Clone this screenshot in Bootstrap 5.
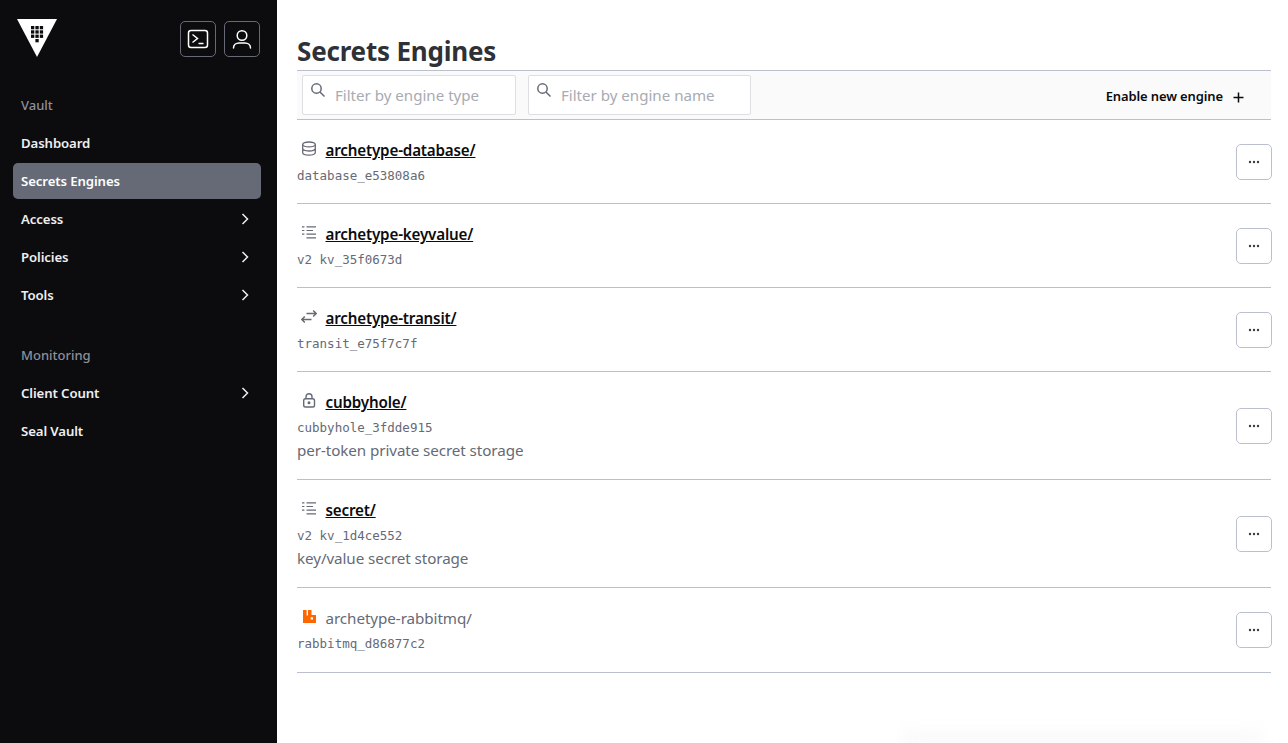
<!doctype html>
<html lang="en"><head><meta charset="utf-8"><title>Secrets Engines</title>
<link href="https://cdn.jsdelivr.net/npm/bootstrap@5.3.0/dist/css/bootstrap.min.css" rel="stylesheet">
<style>
html,body{height:743px;overflow:hidden}
body{font-family:"Noto Sans",sans-serif;background:#fff;color:#3b3d45}
.shell{height:743px}
.side{width:277px;background:#0c0c0e;flex:none}
.side-top{height:95px;padding:19px 17px 0 17px}
.tool-btn{width:36px;height:36px;border:1px solid #656a76;border-radius:5px;background:transparent;padding:0;margin-top:2px;display:flex;align-items:center;justify-content:center}
.side-label{font-size:13px;font-weight:500;color:#8c909c;padding:0 21px;height:20px;line-height:20px}
.side-list{padding:10px 16px 0 13px}
.side-item{height:36px;margin-bottom:2px;padding:2px 8px 0;border-radius:5px;color:#efeff1;font-size:13.2px;font-weight:600;letter-spacing:-.1px;text-decoration:none}
.side-item svg{margin-top:-2px}
.side-item.on{background:#656a76;color:#fff}
.side-gap{height:30px}
.main-area{padding:0 17px 0 20px;min-width:0;position:relative}
.page-title{font-size:26px;font-weight:700;color:#2f3136;margin:0;height:70px;padding-top:34px;line-height:34px;letter-spacing:-.2px}
.tools{height:50px;background:#fafafb;border-top:1px solid #bac1cc;border-bottom:1px solid #bac1cc;padding:4px 0 0 5px}
.filter{height:40px;border:1px solid #dedfe3;border-radius:2px;background:#fff;padding-left:32px;font-size:15.1px;color:#a8abb2;line-height:38px;position:relative}
.filter svg{position:absolute;left:7px;top:6px}
.f1{width:214px;margin-right:12px}
.f2{width:223px}
.enable{font-size:13px;font-weight:600;color:#0c0c0e;margin-left:auto;padding-right:26px;margin-top:-1px;letter-spacing:-.12px}
.enable svg{margin-left:9px}
.eng{border-bottom:1px solid #bac1cc}
.eng-body{padding-top:18px;align-self:flex-start}
.h84{height:84px}.h108{height:108px}.h85{height:85px}
.eng-head{height:24px;line-height:24px}
.eng-ico{width:28.5px;flex:none;padding:3px 0 0 4px}
.eng-ico svg{display:block}
.eng-name{font-size:15.2px;font-weight:600;color:#0c0c0e;text-decoration:underline;letter-spacing:-.18px}
.eng-name.dim{font-weight:400;color:#656a76;text-decoration:none;letter-spacing:-.06px}
.eng-id{font-family:"DejaVu Sans Mono",monospace;font-size:12.5px;color:#656a76;line-height:28px;height:24px}
.eng-desc{font-size:15.2px;color:#656a76;line-height:24px;letter-spacing:-.08px}
.more{width:36px;height:36px;border:1px solid #bac1cc;border-radius:5px;background:#fff;margin-right:-1px;padding:0;display:flex;align-items:center;justify-content:center;flex:none}
.fade-edge{position:absolute;left:625px;width:360px;top:729px;height:30px;background:#f6f6f6;filter:blur(8px);opacity:.5}
</style></head><body>
<div class="d-flex shell">
<nav class="side">
 <div class="side-top d-flex justify-content-between">
  <svg width="40" height="38" viewBox="0 0 40 38"><path d="M0 0h40L20 38z" fill="#fff"/><g fill="#0c0c0e"><rect x="14" y="7" width="3.300" height="3.300"/><rect x="18.400" y="7" width="3.300" height="3.300"/><rect x="22.800" y="7" width="3.300" height="3.300"/><rect x="14" y="11.300" width="3.300" height="3.300"/><rect x="18.400" y="11.300" width="3.300" height="3.300"/><rect x="22.800" y="11.300" width="3.300" height="3.300"/><rect x="14" y="15.600" width="3.300" height="3.300"/><rect x="18.400" y="15.600" width="3.300" height="3.300"/><rect x="22.800" y="15.600" width="3.300" height="3.300"/><rect x="18.400" y="20" width="3.300" height="3.300"/></g></svg>
  <div class="d-flex gap-2">
   <button class="tool-btn" aria-label="Console"><svg width="24" height="24" viewBox="0 0 24 24" fill="none" stroke="#fff" stroke-width="1.5"><rect x="2.500" y="3.500" width="19" height="17" rx="2.500"/><path d="M6.500 7.500l5 4-5 4M12.500 16.500h5"/></svg></button>
   <button class="tool-btn" aria-label="User"><svg width="24" height="24" viewBox="0 0 24 24" fill="none" stroke="#fff" stroke-width="1.5"><circle cx="12" cy="8.500" r="4.800"/><path d="M3.500 21c0-3 2.500-5 5.500-5h6c3 0 5.500 2 5.500 5" stroke-linecap="round"/></svg></button>
  </div>
 </div>
 <div class="side-label">Vault</div>
 <div class="side-list">
  <a class="side-item d-flex align-items-center">Dashboard</a>
  <a class="side-item on d-flex align-items-center">Secrets Engines</a>
  <a class="side-item d-flex align-items-center justify-content-between">Access<svg width="16" height="16" viewBox="0 0 16 16" fill="none" stroke="#efeff1" stroke-width="1.5"><path d="M5.500 3l5 5-5 5"/></svg></a>
  <a class="side-item d-flex align-items-center justify-content-between">Policies<svg width="16" height="16" viewBox="0 0 16 16" fill="none" stroke="#efeff1" stroke-width="1.5"><path d="M5.500 3l5 5-5 5"/></svg></a>
  <a class="side-item d-flex align-items-center justify-content-between">Tools<svg width="16" height="16" viewBox="0 0 16 16" fill="none" stroke="#efeff1" stroke-width="1.5"><path d="M5.500 3l5 5-5 5"/></svg></a>
 </div>
 <div class="side-gap"></div>
 <div class="side-label">Monitoring</div>
 <div class="side-list">
  <a class="side-item d-flex align-items-center justify-content-between">Client Count<svg width="16" height="16" viewBox="0 0 16 16" fill="none" stroke="#efeff1" stroke-width="1.5"><path d="M5.500 3l5 5-5 5"/></svg></a>
  <a class="side-item d-flex align-items-center">Seal Vault</a>
 </div>
</nav>
<main class="main-area flex-grow-1">
 <h1 class="page-title">Secrets Engines</h1>
 <div class="tools d-flex align-items-start">
  <div class="filter f1"><svg width="16" height="16" viewBox="0 0 16 16" fill="none" stroke="#656a76" stroke-width="1.500"><circle cx="6.500" cy="6.500" r="4.700"/><path d="M10 10l4.500 4.500"/></svg>Filter by engine type</div>
  <div class="filter f2"><svg width="16" height="16" viewBox="0 0 16 16" fill="none" stroke="#656a76" stroke-width="1.500"><circle cx="6.500" cy="6.500" r="4.700"/><path d="M10 10l4.500 4.500"/></svg>Filter by engine name</div>
  <div class="enable align-self-center">Enable new engine<svg width="13" height="13" viewBox="0 0 13 13" stroke="#0c0c0e" stroke-width="1.500"><path d="M6.500 1.500v10M1.500 6.500h10"/></svg></div>
 </div>

 <div class="eng h84 d-flex justify-content-between align-items-center"><div class="eng-body">
  <div class="eng-head d-flex"><div class="eng-ico"><svg width="16" height="16" viewBox="0 0 16 16" fill="none" stroke="#656a76" stroke-width="1.300"><ellipse cx="8" cy="3.400" rx="6.300" ry="2.400"/><path d="M1.700 3.400v8.400c0 1.300 2.800 2.400 6.300 2.400s6.300-1.100 6.300-2.400V3.400M1.700 7.600C1.700 8.900 4.500 10 8 10s6.300-1.100 6.300-2.400"/></svg></div><a class="eng-name">archetype-database/</a></div>
  <div class="eng-id">database_e53808a6</div></div>
  <button class="more" aria-label="More"><svg width="12" height="4" viewBox="0 0 12 4" fill="#3b3d45"><circle cx="2" cy="2" r="1.200"/><circle cx="6" cy="2" r="1.200"/><circle cx="10" cy="2" r="1.200"/></svg></button></div>

 <div class="eng h84 d-flex justify-content-between align-items-center"><div class="eng-body">
  <div class="eng-head d-flex"><div class="eng-ico"><svg width="16" height="16" viewBox="0 0 16 16" fill="none" stroke="#656a76" stroke-width="1.200"><path d="M1 1.800h2.400M5.500 1.800H15M1 5.500h2.400M5.500 5.500h6.500M1 9.200h2.400M5.500 9.200H15M5.500 12.800H15"/></svg></div><a class="eng-name">archetype-keyvalue/</a></div>
  <div class="eng-id">v2 kv_35f0673d</div></div>
  <button class="more" aria-label="More"><svg width="12" height="4" viewBox="0 0 12 4" fill="#3b3d45"><circle cx="2" cy="2" r="1.200"/><circle cx="6" cy="2" r="1.200"/><circle cx="10" cy="2" r="1.200"/></svg></button></div>

 <div class="eng h84 d-flex justify-content-between align-items-center"><div class="eng-body">
  <div class="eng-head d-flex"><div class="eng-ico"><svg width="16" height="16" viewBox="0 0 16 16" fill="none" stroke="#656a76" stroke-width="1.500"><path d="M5.500 4.500H15.200M12.200 1.500l3 3-3 3M10.500 10.500H.8M3.800 7.500l-3 3 3 3"/></svg></div><a class="eng-name">archetype-transit/</a></div>
  <div class="eng-id">transit_e75f7c7f</div></div>
  <button class="more" aria-label="More"><svg width="12" height="4" viewBox="0 0 12 4" fill="#3b3d45"><circle cx="2" cy="2" r="1.200"/><circle cx="6" cy="2" r="1.200"/><circle cx="10" cy="2" r="1.200"/></svg></button></div>

 <div class="eng h108 d-flex justify-content-between align-items-center"><div class="eng-body">
  <div class="eng-head d-flex"><div class="eng-ico"><svg width="16" height="16" viewBox="0 0 16 16" fill="none" stroke="#656a76" stroke-width="1.400"><rect x="2.700" y="5.700" width="10.800" height="8.300" rx="1.800"/><path d="M5 5.700V3.700a3 3 0 016 0v2"/><circle cx="8" cy="9.800" r=".8" fill="#656a76"/></svg></div><a class="eng-name">cubbyhole/</a></div>
  <div class="eng-id">cubbyhole_3fdde915</div>
  <div class="eng-desc">per-token private secret storage</div></div>
  <button class="more" aria-label="More"><svg width="12" height="4" viewBox="0 0 12 4" fill="#3b3d45"><circle cx="2" cy="2" r="1.200"/><circle cx="6" cy="2" r="1.200"/><circle cx="10" cy="2" r="1.200"/></svg></button></div>

 <div class="eng h108 d-flex justify-content-between align-items-center"><div class="eng-body">
  <div class="eng-head d-flex"><div class="eng-ico"><svg width="16" height="16" viewBox="0 0 16 16" fill="none" stroke="#656a76" stroke-width="1.200"><path d="M1 1.800h2.400M5.500 1.800H15M1 5.500h2.400M5.500 5.500h6.500M1 9.200h2.400M5.500 9.200H15M5.500 12.800H15"/></svg></div><a class="eng-name">secret/</a></div>
  <div class="eng-id">v2 kv_1d4ce552</div>
  <div class="eng-desc">key/value secret storage</div></div>
  <button class="more" aria-label="More"><svg width="12" height="4" viewBox="0 0 12 4" fill="#3b3d45"><circle cx="2" cy="2" r="1.200"/><circle cx="6" cy="2" r="1.200"/><circle cx="10" cy="2" r="1.200"/></svg></button></div>

 <div class="eng h85 d-flex justify-content-between align-items-center"><div class="eng-body">
  <div class="eng-head d-flex"><div class="eng-ico"><svg width="16" height="16" viewBox="0 0 16 16"><path fill-rule="evenodd" d="M2 1h3.600v5.500H7V1h3.500v5H15v8H2zM9.700 8.200H12v2.300H9.700z" fill="#ff6600"/></svg></div><a class="eng-name dim">archetype-rabbitmq/</a></div>
  <div class="eng-id">rabbitmq_d86877c2</div></div>
  <button class="more" aria-label="More"><svg width="12" height="4" viewBox="0 0 12 4" fill="#3b3d45"><circle cx="2" cy="2" r="1.200"/><circle cx="6" cy="2" r="1.200"/><circle cx="10" cy="2" r="1.200"/></svg></button></div>
 <div class="fade-edge"></div>
</main>
</div>
<script src="https://cdn.jsdelivr.net/npm/bootstrap@5.3.0/dist/js/bootstrap.bundle.min.js"></script>
</body></html>
